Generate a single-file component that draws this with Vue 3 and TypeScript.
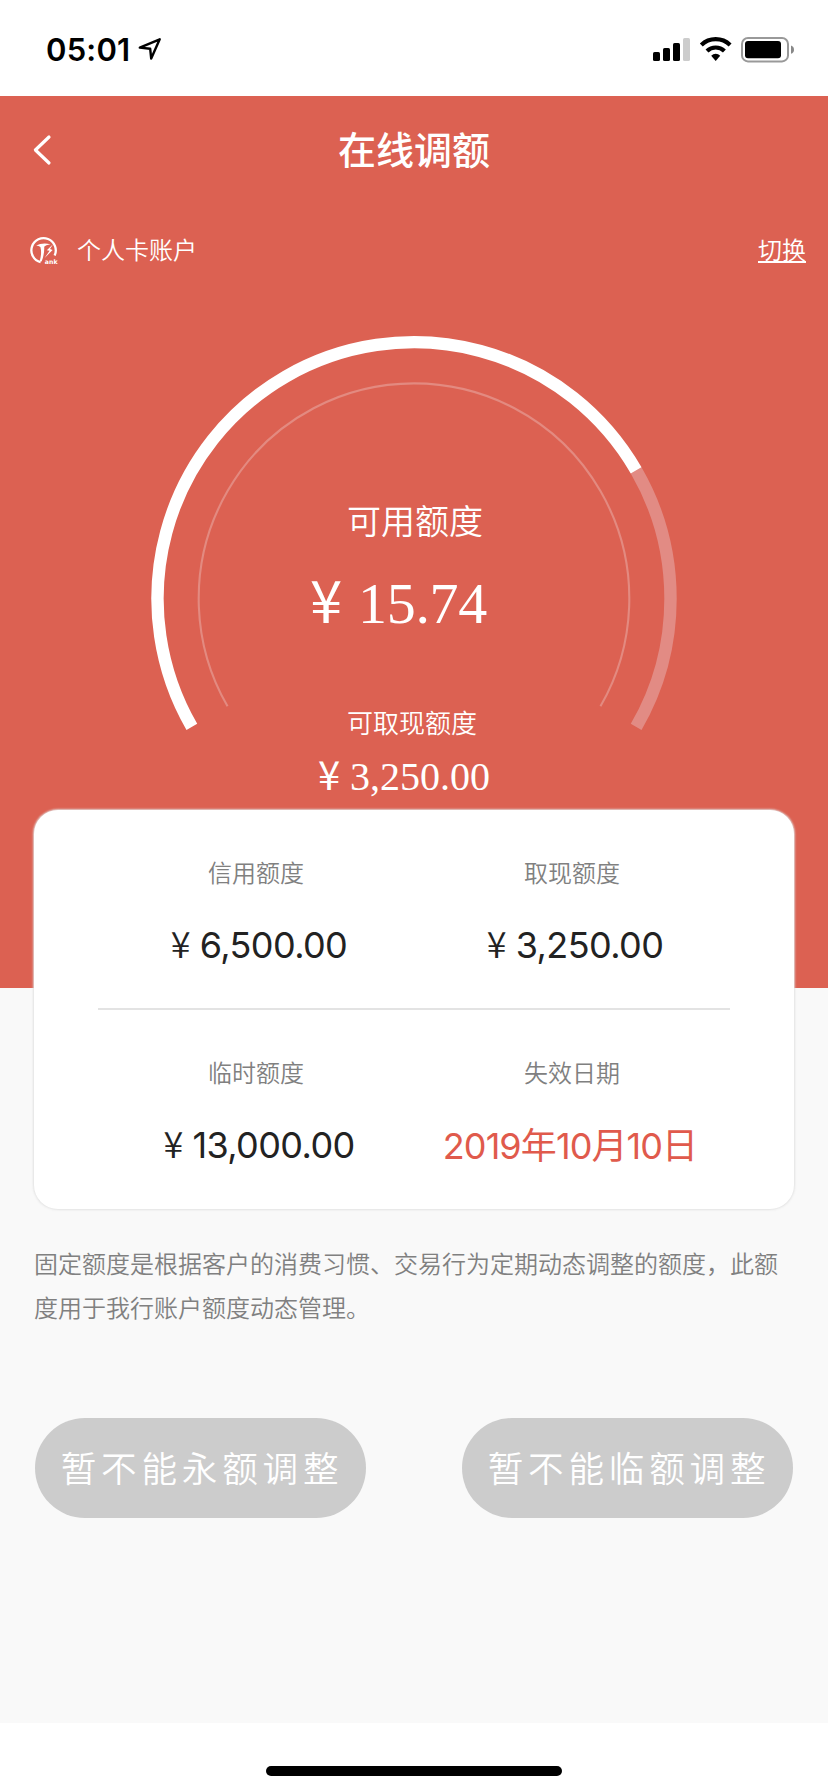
<script setup lang="ts">
interface LimitCell {
  label: string
  currency?: string
  value: string
  highlight?: boolean
}

const rows: LimitCell[][] = [
  [
    { label: '信用额度', currency: '¥', value: '6,500.00' },
    { label: '取现额度', currency: '¥', value: '3,250.00' },
  ],
  [
    { label: '临时额度', currency: '¥', value: '13,000.00' },
    { label: '失效日期', value: '2019年10月10日', highlight: true },
  ],
]

const actions: string[] = ['暂不能永额调整', '暂不能临额调整']

// Angles are in degrees, clockwise from the positive x axis.
function arc(radius: number, from: number, to: number): string {
  const cx = 276
  const cy = 274.7
  const point = (deg: number): string => {
    const rad = (deg * Math.PI) / 180
    return `${(cx + radius * Math.cos(rad)).toFixed(2)} ${(cy + radius * Math.sin(rad)).toFixed(2)}`
  }
  const large = to - from > 180 ? 1 : 0
  return `M${point(from)}A${radius} ${radius} 0 ${large} 1 ${point(to)}`
}

const trackArc = arc(256.5, 330, 390)
const valueArc = arc(256.5, 150, 330)
const innerArc = arc(215.3, 150, 390)
</script>

<template>
  <div class="screen">
    <div class="status">
      <div class="clock">
        <span class="time">05:01</span>
        <svg class="location" width="26" height="26" viewBox="0 0 26 26">
          <path d="M2.8 11.6 22.7 3.3 14.2 22.6 13.2 12.8Z" />
        </svg>
      </div>
      <svg class="indicators" width="144" height="30" viewBox="0 0 144 30">
        <rect x="3" y="17" width="7" height="9" rx="1.6" />
        <rect x="13" y="13" width="7" height="13" rx="1.6" />
        <rect x="23" y="8" width="7" height="18" rx="1.6" />
        <rect x="33" y="3" width="7" height="23" rx="1.6" fill="#ccc" />
        <g fill="none" stroke="#000" stroke-width="4.2">
          <path d="M51.3 9.9A20.8 20.8 0 0 1 80.1 9.9" />
          <path d="M57 16A12.6 12.6 0 0 1 74.4 16" />
        </g>
        <path d="M61.2 20.7A6.4 6.4 0 0 1 70.2 20.7L65.7 26Z" />
        <rect x="92" y="3" width="46" height="23.4" rx="6" fill="none" stroke="#999" stroke-width="2" />
        <rect x="95" y="6" width="36" height="17.2" rx="3" />
        <path d="M141 10.6Q144 11.6 144 14.7T141 18.8Z" fill="#888" />
      </svg>
    </div>

    <header class="hero">
      <div class="navbar">
        <svg class="back" width="20" height="32" viewBox="0 0 20 32">
          <path d="M17 3 3.4 16 17 29" />
        </svg>
        <h1>在线调额</h1>
      </div>

      <div class="account">
        <svg class="logo" width="30" height="32" viewBox="0 0 30 32">
          <path d="M11.6 29.2A12.2 12.2 0 1 1 25.6 22.6" fill="none" stroke="#fff" stroke-width="2.3" />
          <path d="M7.2 12.4Q13 9.6 21.5 11.2Q16.6 11.8 15.2 13.8Q15.6 21 12.6 28.6L10.8 28Q13 20 11.4 14Q9.8 12.6 7.2 12.4Z" fill="#fff" />
          <path d="M24 11.3 17.8 17.2 20.6 17.8 15.6 25 23.6 17 21 16Z" fill="#fff" />
          <text x="15.8" y="30.6">ank</text>
        </svg>
        <span class="account-name">个人卡账户</span>
        <a class="switch">切换</a>
      </div>

      <div class="gauge">
        <svg class="dial" width="552" height="420" viewBox="0 0 552 420">
          <path :d="trackArc" class="track" />
          <path :d="valueArc" class="progress" />
          <path :d="innerArc" class="inner" />
        </svg>
        <div class="readout">
          <div class="available-label">可用额度</div>
          <div class="available"><span class="yen">¥</span><span>15.74</span></div>
          <div class="cash-label">可取现额度</div>
          <div class="cash"><span class="yen">¥</span><span>3,250.00</span></div>
        </div>
      </div>
    </header>

    <main>
      <section class="card">
        <div v-for="(row, r) in rows" :key="r" class="row">
          <div v-for="cell in row" :key="cell.label" class="cell">
            <div class="label">{{ cell.label }}</div>
            <div class="value" :class="{ highlight: cell.highlight }">
              <span v-if="cell.currency" class="yen">{{ cell.currency }}</span><span>{{ cell.value }}</span>
            </div>
          </div>
        </div>
      </section>

      <p class="note">固定额度是根据客户的消费习惯、交易行为定期动态调整的额度，此额度用于我行账户额度动态管理。</p>

      <div class="actions">
        <button v-for="text in actions" :key="text" disabled>{{ text }}</button>
      </div>
    </main>

    <footer><span class="home-bar"></span></footer>
  </div>
</template>

<style>
body {
  margin: 0;
  background: #fff;
}
</style>

<style scoped>
.screen {
  display: flex;
  flex-direction: column;
  width: 828px;
  height: 1792px;
  overflow: hidden;
  background: #fff;
  font-family: 'Noto Sans CJK SC', sans-serif;
  font-weight: 350;
}

.status {
  box-sizing: border-box;
  display: flex;
  justify-content: space-between;
  height: 96px;
  padding: 35px 34px 0 46px;
}

.clock {
  display: flex;
  height: 30px;
}

.time {
  font: 600 31px/30px Inter, sans-serif;
  letter-spacing: 0.2px;
}

.location {
  margin: 1px 0 0 7px;
  fill: none;
  stroke: #000;
  stroke-width: 2.4;
  stroke-linejoin: round;
}

.hero {
  box-sizing: border-box;
  flex: none;
  height: 892px;
  background: #dc6152;
  color: #fff;
}

.navbar {
  display: grid;
  grid-template-columns: 60px 1fr 60px;
  align-items: center;
  height: 108px;
}

.back {
  margin-left: 32px;
  fill: none;
  stroke: #fff;
  stroke-width: 3.2;
  stroke-linecap: round;
  stroke-linejoin: round;
}

h1 {
  margin: 0 0 4px;
  font-size: 38px;
  line-height: 54px;
  font-weight: 500;
  text-align: center;
}

.account {
  display: flex;
  align-items: center;
  height: 40px;
  margin-top: 25px;
  padding: 0 22px 0 29px;
  font-size: 24px;
  line-height: 36px;
}

.logo text {
  fill: #fff;
  font: 700 6.2px 'DejaVu Sans', sans-serif;
}

.account-name {
  margin-left: 18px;
}

.switch {
  margin-left: auto;
  text-decoration: underline;
  text-decoration-thickness: 1.5px;
  text-underline-offset: 2px;
}

.gauge {
  display: grid;
  width: 552px;
  margin: 55px auto 0;
}

.dial,
.readout {
  grid-area: 1 / 1;
}

.dial path {
  fill: none;
}

.track {
  stroke: #e28b84;
  stroke-width: 12.4;
}

.progress {
  stroke: #fff;
  stroke-width: 12.4;
}

.inner {
  stroke: #e38a80;
  stroke-width: 2.1;
}

.readout {
  display: flex;
  flex-direction: column;
  padding-left: 138px;
}

.available-label {
  margin: 171px 0 0 71px;
  font-size: 34px;
  line-height: 50px;
}

.available,
.cash {
  display: flex;
  align-items: baseline;
  font-family: 'Liberation Serif', serif;
  font-weight: 400;
}

.available .yen,
.cash .yen {
  font-family: 'Noto Sans CJK SC', sans-serif;
}

.available {
  height: 60px;
  margin: 23px 0 0 34px;
  font-size: 58px;
  line-height: 60px;
  letter-spacing: -0.3px;
}

.available .yen {
  width: 48px;
}

.cash-label {
  margin: 74px 0 0 71px;
  font-size: 26px;
  line-height: 40px;
}

.cash {
  margin: 11px 0 0 42px;
  font-size: 40px;
  line-height: 40px;
}

.cash .yen {
  width: 32px;
}

main {
  flex: none;
  height: 735px;
  padding: 0 34px;
  background: #f9f9f9;
}

.card {
  box-sizing: border-box;
  height: 399px;
  margin-top: -178px;
  padding: 0 64px;
  border-radius: 24px;
  background: #fff;
  box-shadow: 0 0 2px 1px rgba(225, 225, 225, 0.9);
  position: relative;
}

.row {
  box-sizing: border-box;
  display: grid;
  grid-template-columns: 1fr 1fr;
  height: 198px;
  padding-top: 44px;
}

.row + .row {
  height: 201px;
  border-top: 2px solid #e3e3e3;
}

.cell {
  display: flex;
  flex-direction: column;
  align-items: center;
}

.label {
  color: #808080;
  font-size: 24px;
  line-height: 36px;
}

.value {
  display: flex;
  align-items: baseline;
  height: 44px;
  margin-top: 30px;
  padding-left: 6px;
  color: #222;
  font: 400 36px/44px Inter, 'Noto Sans CJK SC', sans-serif;
  letter-spacing: -0.6px;
}

.value .yen {
  width: 29px;
  font-family: 'Noto Sans CJK SC', sans-serif;
  font-weight: 350;
}

.value.highlight {
  margin-top: 34px;
  padding: 0 4px 0 0;
  color: #e05a4c;
  letter-spacing: -0.9px;
}

.note {
  margin: 32px 0 0;
  color: #808080;
  font-size: 24px;
  line-height: 44px;
}

.actions {
  display: flex;
  justify-content: space-between;
  margin: 89px 0 0;
  padding: 0 1px;
}

button {
  width: 331px;
  height: 100px;
  padding: 0 0 2px 3px;
  border: 0;
  border-radius: 50px;
  background: #ccc;
  color: #fff;
  font: 350 35.6px/50px 'Noto Sans CJK SC', sans-serif;
  letter-spacing: 4.8px;
  white-space: nowrap;
}

footer {
  display: flex;
  justify-content: center;
  padding-top: 43px;
}

.home-bar {
  width: 296px;
  height: 10px;
  border-radius: 5px;
  background: #000;
}
</style>
